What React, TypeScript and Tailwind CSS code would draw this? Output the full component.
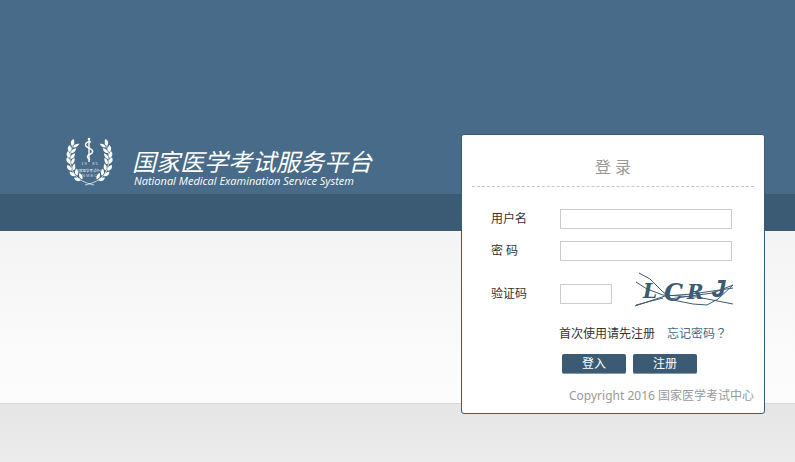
import type { ReactNode } from 'react';

const leaves = [
  [7, 6, 25],
  [4, 12, 12],
  [3, 18, 2],
  [3, 24, -12],
  [4, 31, -28],
  [7, 37, -42],
  [12, 42, -60],
];

function Branch() {
  return (
    <g fill="white">
      <path d="M8 6C3 14 2 29 9 38C13 43 19 46 28 48" fill="none" stroke="white" strokeWidth="0.7" />
      {leaves.map(([x, y, angle]) => (
        <g key={y} transform={`translate(${x} ${y}) rotate(${angle})`}>
          <path d="M0 3C-3 1 -3 -2 -1 -4C1 -2 2 1 0 3Z" />
          <path d="M2 4C1 1 3 -1 6 -2C6 1 5 3 2 4Z" />
        </g>
      ))}
    </g>
  );
}

function Emblem() {
  return (
    <svg className="h-[50px] w-12 shrink-0" viewBox="0 0 48 50" aria-hidden="true">
      <Branch />
      <g transform="translate(47 0) scale(-1 1)">
        <Branch />
      </g>
      <path d="M23 2V25" stroke="white" strokeWidth="1.4" />
      <circle cx="23" cy="2" r="1.3" fill="white" />
      <path d="M25 5C20 4 18 8 21 10C25 12 28 13 26 16C24 18 20 18 22 21L24 23" fill="none" stroke="white" strokeWidth="1.5" />
      <g fill="white" textAnchor="middle" fontFamily="'Liberation Sans', 'Noto Sans CJK SC', sans-serif">
        <text x="18" y="28" fontSize="4" opacity="0.8">1 9</text>
        <text x="29" y="28" fontSize="4" opacity="0.8">8 5</text>
        <text x="23.5" y="35" fontSize="3.4" opacity="0.9">国家医学考试中心</text>
        <text x="23.5" y="40" fontSize="4" opacity="0.7">N M E C</text>
      </g>
    </svg>
  );
}

function Captcha() {
  return (
    <svg className="ml-[23px] h-11 w-[102px]" viewBox="0 2 102 44" role="img" aria-label="LCRJ">
      <g fill="#3b5b74" fontFamily="'DejaVu Serif', serif" fontWeight="bold" fontStyle="italic">
        <text x="8" y="28" fontSize="20">L</text>
        <text x="29" y="31" fontSize="24">C</text>
        <text x="52" y="29" fontSize="20">R</text>
        <text x="76" y="27" fontSize="26" fontFamily="'Liberation Mono', monospace">J</text>
      </g>
      <g fill="none" stroke="#3b5b74" strokeWidth="1">
        <path d="M4 3L15 9L27 21L38 30L58 34L72 35L83 29L98 15" />
        <path d="M1 12L12 19L28 25L62 27L98 34" />
        <path d="M0 36L30 26L57 24L98 18" />
        <path d="M1 35L28 28" />
        <path d="M35 29L55 26L78 23L98 15" />
      </g>
    </svg>
  );
}

function Field({ id, label, children }: { id: string; label: string; children: ReactNode }) {
  return (
    <div className="flex items-center">
      <label htmlFor={id} className="w-[69px] shrink-0">{label}</label>
      {children}
    </div>
  );
}

const box = 'h-5 border border-[#cccccc] bg-white px-1 outline-none';
const button = 'h-5 w-16 rounded-xs border-b border-[#8397a5] bg-[#3b5b74] text-white leading-5';

export default function App() {
  return (
    <div className="grid min-h-screen font-['Noto_Sans','Noto_Sans_CJK_SC',sans-serif] text-xs text-[#333333]">
      <div className="col-start-1 row-start-1 flex flex-col">
        <div className="h-[194px] bg-[#476b88]" />
        <div className="h-[37px] bg-[#3b5b74]" />
        <div className="h-[172px] bg-linear-to-b from-[#f4f4f4] to-[#fdfdfd]" />
        <div className="grow border-t border-[#d8d8d8] bg-linear-to-b from-[#e6e6e6] to-[#ececec]" />
      </div>
      <main className="col-start-1 row-start-1 flex items-start justify-between pt-[134px] pr-[30px] pb-12 pl-[66px]">
        <header className="flex pt-[3px] text-white">
          <Emblem />
          <div className="pt-3 pl-[18px] italic">
            <h1 className="text-2xl leading-[26px] whitespace-nowrap">国家医学考试服务平台</h1>
            <p className="pl-0.5 font-['Open_Sans',sans-serif] text-[11px] leading-3 whitespace-nowrap">National Medical Examination Service System</p>
          </div>
        </header>
        <form className="w-[304px] shrink-0 rounded-[3px] border border-[#3b5b74] bg-white px-2.5 pb-[7px]" onSubmit={(e) => e.preventDefault()}>
          <h2 className="border-b border-dashed border-[#c8c8c8] pt-5 pb-[7px] text-center text-base leading-6 text-[#999999]">登 录</h2>
          <div className="flex flex-col gap-3 pt-[22px] pl-[19px]">
            <Field id="user" label="用户名">
              <input id="user" type="text" className={`${box} w-[172px]`} />
            </Field>
            <Field id="password" label="密 码">
              <input id="password" type="password" className={`${box} w-[172px]`} />
            </Field>
          </div>
          <div className="pt-[11px] pl-[19px]">
            <Field id="code" label="验证码">
              <input id="code" type="text" className={`${box} w-[52px]`} />
              <Captcha />
            </Field>
          </div>
          <p className="flex items-baseline gap-3 pt-2 pl-[87px] leading-5">
            <span>首次使用请先注册</span>
            <a href="#forgot" className="text-[#476b88]">
              忘记密码<span className="font-['Noto_Sans_CJK_TC',sans-serif] leading-4">？</span>
            </a>
          </p>
          <div className="flex gap-[7px] pt-2.5 pl-[90px]">
            <button type="submit" className={button}>登入</button>
            <button type="button" className={button}>注册</button>
          </div>
          <p className="pt-3 text-right leading-5 text-[#999999]">Copyright 2016 国家医学考试中心</p>
        </form>
      </main>
    </div>
  );
}
